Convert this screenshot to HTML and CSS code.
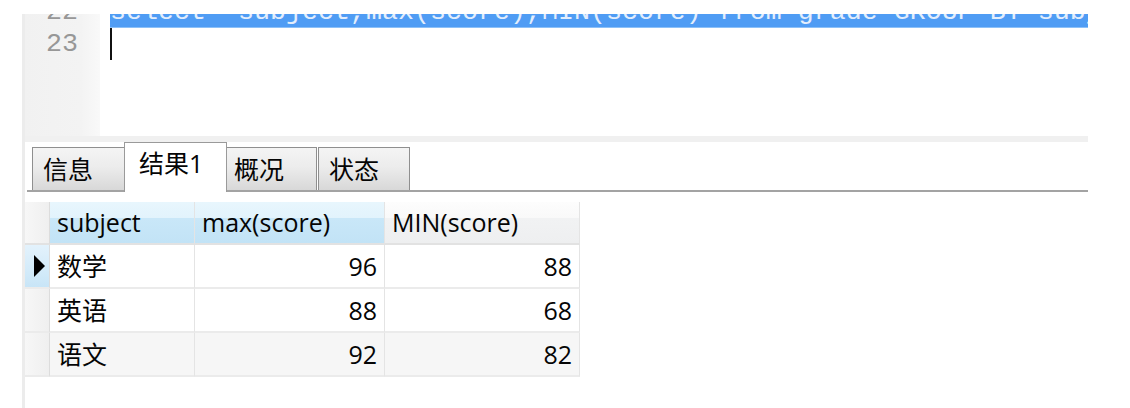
FILE: index.html
```html
<!DOCTYPE html>
<html lang="zh-CN">
<head>
<meta charset="utf-8">
<title>Query result</title>
<link rel="stylesheet" href="styles.css">
</head>
<body>
<div class="app">
  <div class="editor">
    <div class="gutter">
      <div class="ln">22</div>
      <div class="ln">23</div>
    </div>
    <div class="code">
      <div class="line selected">select  subject,max(score),MIN(score) from grade GROUP BY subject;</div>
      <div class="line"><span class="caret"></span></div>
    </div>
  </div>
  <div class="splitter"></div>
  <div class="tabs">
    <div class="tab tab-info">信息</div>
    <div class="tab tab-active">结果1</div>
    <div class="tab tab-profile">概况</div>
    <div class="tab tab-status">状态</div>
  </div>
  <div class="grid-wrap">
    <div class="grid">
      <div class="hc rh"></div>
      <div class="hc sel">subject</div>
      <div class="hc sel">max(score)</div>
      <div class="hc">MIN(score)</div>

      <div class="rh cur"><svg class="arrow" width="11" height="22" viewBox="0 0 11 22"><polygon points="0,0 11,11 0,22" fill="#000"/></svg></div>
      <div class="c">数学</div>
      <div class="c num">96</div>
      <div class="c num">88</div>

      <div class="rh"></div>
      <div class="c">英语</div>
      <div class="c num">88</div>
      <div class="c num">68</div>

      <div class="rh"></div>
      <div class="c alt">语文</div>
      <div class="c num alt">92</div>
      <div class="c num alt">82</div>
    </div>
  </div>
</div>
</body>
</html>
```

FILE: styles.css
```css
html, body {
  margin: 0;
  padding: 0;
  background: #ffffff;
}

body {
  font-family: "Open Sans", "Noto Sans CJK SC", sans-serif;
  color: #050505;
}

.app {
  margin: 14px 0 0 22px;
  width: 1063px;
  height: 394px;
  border-left: 3px solid #ececec;
  display: flex;
  flex-direction: column;
}

/* ---------- editor ---------- */
.editor {
  height: 122px;
  display: flex;
  overflow: hidden;
  flex: none;
}

.gutter {
  width: 75px;
  flex: none;
  background: linear-gradient(to right, #f1f1f1 0%, #f3f3f3 75%, #f9f9f9 100%);
  font-family: "Liberation Mono", monospace;
  font-size: 26.67px;
  color: #979797;
  text-align: right;
  padding-right: 22px;
  box-sizing: border-box;
}

.gutter .ln {
  height: 32px;
  line-height: 32px;
}

.gutter .ln:first-child,
.code .line:first-child {
  margin-top: -18px;
}

.code {
  flex: 1;
  padding-left: 10px;
  font-family: "Liberation Mono", monospace;
  font-size: 26.67px;
  overflow: hidden;
}

.line {
  height: 32px;
  line-height: 32px;
  white-space: pre;
  overflow: hidden;
}

.line.selected {
  background: #4f9cf4;
  color: #e4eefc;
  box-shadow: inset 0 -1px 0 #8cc0f8;
}

.caret {
  display: inline-block;
  width: 2px;
  height: 32px;
  background: #111;
  vertical-align: top;
}

.splitter {
  height: 6px;
  background: #f0f0f0;
  flex: none;
}

/* ---------- tabs ---------- */
.tabs {
  flex: none;
  height: 48px;
  margin-left: 2px;
  padding-left: 5px;
  border-bottom: 2px solid #a3a3a3;
  display: flex;
  align-items: flex-end;
  font-size: 25px;
}

.tab {
  box-sizing: border-box;
  height: 43px;
  border: 1px solid #8f8f8f;
  border-bottom: 0;
  background: linear-gradient(#f4f4f4 0%, #ececec 45%, #d8d8d8 100%);
  display: flex;
  align-items: center;
  padding-left: 10px;
  line-height: 1;
}

.tab-info { width: 93px; }
.tab-profile { width: 91px; padding-left: 7px; margin-left: -1px; }
.tab-status { width: 92px; margin-left: 1px; }

.tab-active {
  width: 103px;
  height: 50px;
  margin-bottom: -2px;
  margin-left: -1px;
  background: #ffffff;
  padding-left: 14px;
  padding-bottom: 8px;
  position: relative;
  z-index: 1;
  border-color: #9a9a9a;
}

/* ---------- grid ---------- */
.grid-wrap {
  padding-top: 10px;
}

.grid {
  display: grid;
  grid-template-columns: 25px 145px 190px 195px;
  grid-template-rows: 43px 44px 44px 44px;
  font-size: 25px;
  line-height: 1;
}

.grid > div {
  box-sizing: border-box;
  display: flex;
  align-items: center;
  border-right: 1px solid #e4e4e4;
  border-bottom: 2px solid #ebebeb;
  padding: 0 7px;
  white-space: nowrap;
}

.hc {
  background: linear-gradient(#fdfdfd 0%, #f9f9f9 38%, #f1f2f3 40%, #eeeff0 100%);
  border-bottom-color: #e2e2e2 !important;
}

.hc.sel {
  background: linear-gradient(#e8f6fd 0%, #e2f3fc 38%, #c9e7f8 40%, #c2e3f6 100%);
}

.grid > .rh {
  padding: 0;
  background: linear-gradient(to right, #f7f7f7, #efefef);
  border-right: 1px solid #dcdcdc;
}

.grid > .rh.cur {
  background: linear-gradient(#e3f2fc 0%, #d6ecfa 50%, #c8e5f7 100%);
  justify-content: flex-end;
  padding-right: 4px;
}

.arrow {
  display: block;
}

.c {
  background: #ffffff;
}

.c.alt {
  background: #f6f6f6;
}

.num {
  justify-content: flex-end;
}
```
